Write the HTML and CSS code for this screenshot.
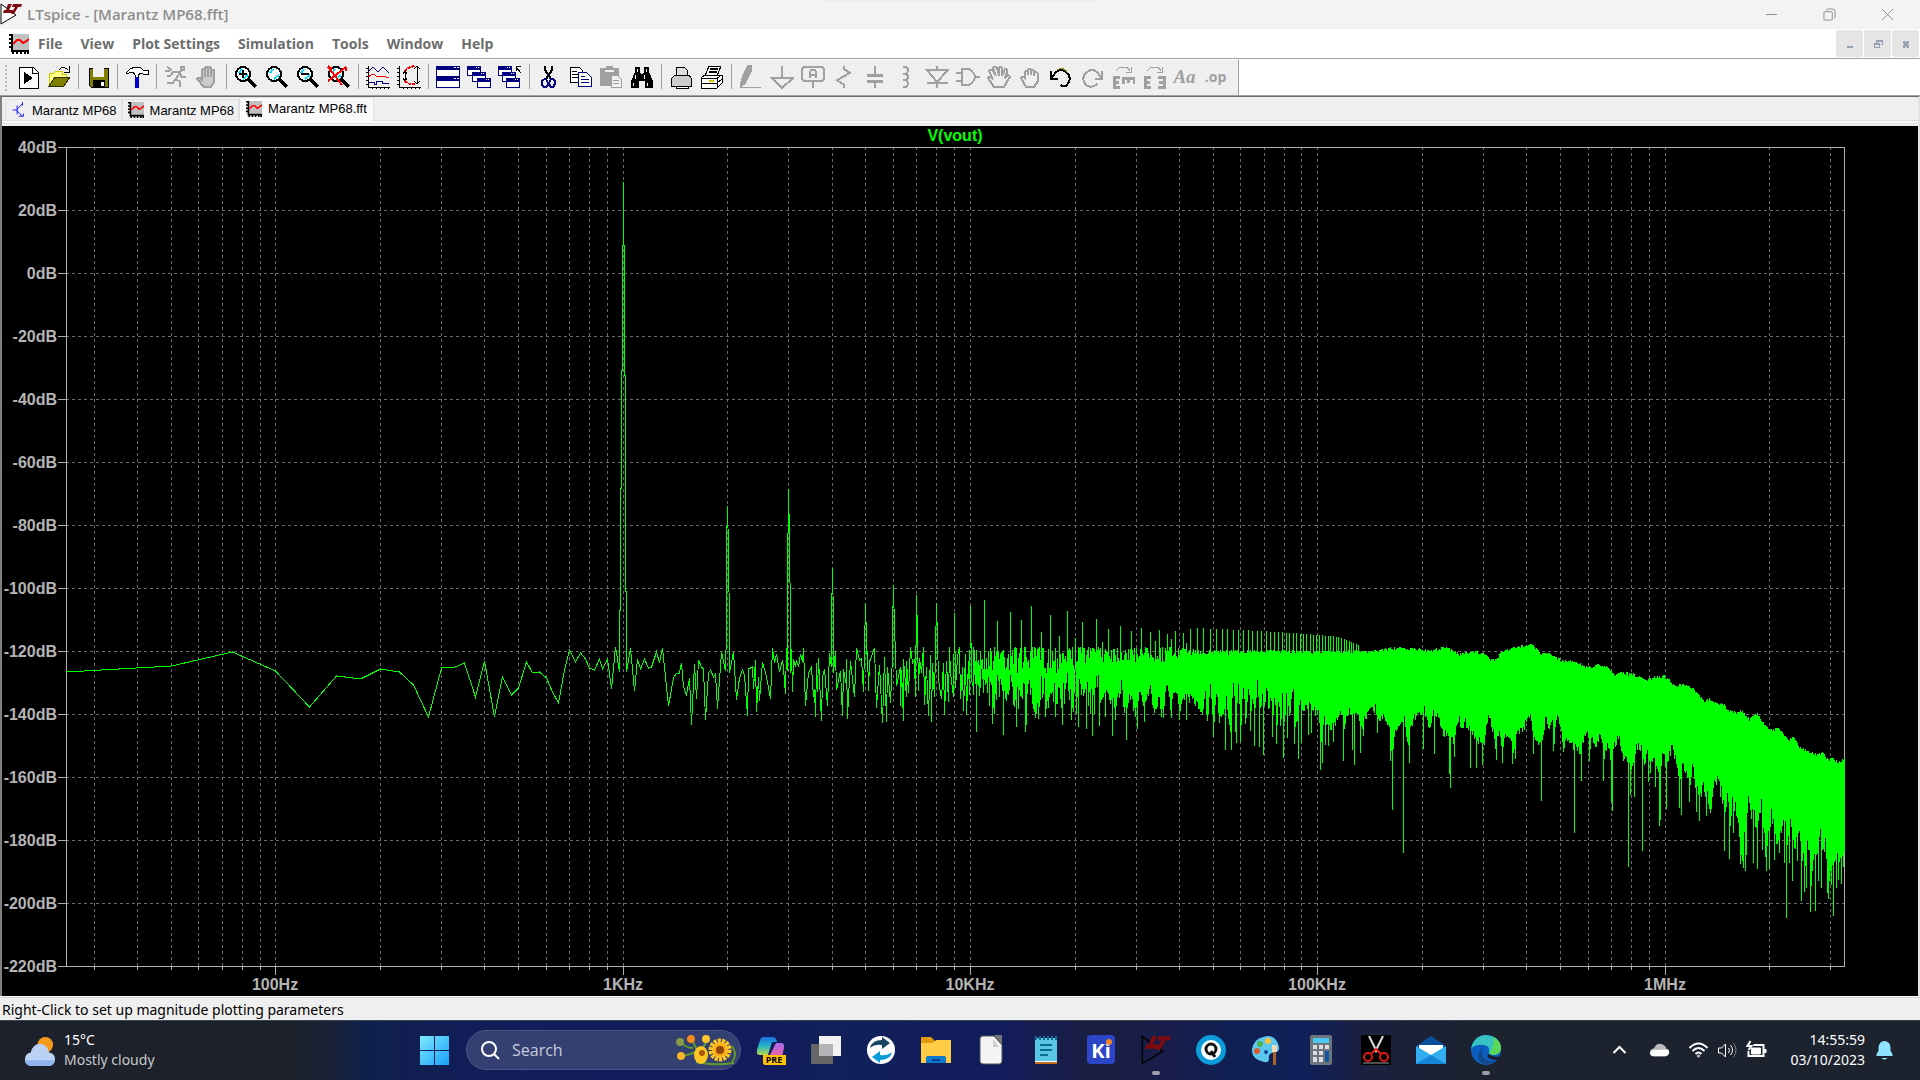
FILE: index.html
```html
<!DOCTYPE html>
<html lang="en">
<head>
<meta charset="utf-8">
<title>LTspice - [Marantz MP68.fft]</title>
<link rel="stylesheet" href="styles.css">
</head>
<body>
<svg class="defs" aria-hidden="true">
  <symbol id="logo" viewBox="0 0 22 22">
    <path d="M1 1V21L16 12z" stroke="currentColor"/>
    <path d="M8 1h4L9 7h4l-1 3H3l1-3h2zM13 1h9l-1 3h-3l-4 7h-3l4-7h-3z" fill="#7d0b10"/>
  </symbol>
  <symbol id="plot" viewBox="0 0 20 20">
    <path d="M3 0h17v16H3z" fill="#c0c0c0"/>
    <path d="M3 0v17M0 1h4M0 5h4M0 9h4M0 13h4M2 17h18M4 17v3M8 17v3M12 17v3M16 17v3M19 17v3" stroke="#000" stroke-width="2" fill="none"/>
    <path d="M4 10l4-4h3l3 3 2-1 4-3" stroke="#f00" stroke-width="2" fill="none"/>
  </symbol>
  <symbol id="lens" viewBox="0 0 24 24">
    <circle cx="9" cy="9" r="7" fill="#fff" stroke="#000" stroke-width="2"/>
    <path d="M5 8l3-4M9 14l5-4" stroke="#0df" stroke-width="2"/>
    <path d="M14 14l8 8" stroke="#000" stroke-width="4"/>
  </symbol>
  <symbol id="win" viewBox="0 0 14 10">
    <path d="M0 0h14v10H0z" fill="#000080"/><path d="M1 4h12v5H1z" fill="#fff"/><path d="M9 1h1v1H9zM11 1h1v1h-1z" fill="#fff"/>
  </symbol>
</svg>

<header class="titlebar">
  <svg class="app-logo"><use href="#logo"/></svg>
  <h1>LTspice - [Marantz MP68.fft]</h1>
  <div class="win-controls">
    <button aria-label="Minimize"><svg viewBox="0 0 14 14"><path d="M1 7h12"/></svg></button>
    <button aria-label="Restore"><svg viewBox="0 0 14 14"><path d="M4 3V2q0-1 1-1h5q3 0 3 3v6q0 1-1 1M2 4h7q1 0 1 1v7q0 1-1 1H2q-1 0-1-1V5q0-1 1-1z"/></svg></button>
    <button aria-label="Close"><svg viewBox="0 0 14 14"><path d="M1 1l12 12M13 1L1 13"/></svg></button>
  </div>
</header>

<nav class="menubar">
  <svg class="menu-icon"><use href="#plot"/></svg>
  <button>File</button><button>View</button><button>Plot Settings</button><button>Simulation</button><button>Tools</button><button>Window</button><button>Help</button>
  <div class="child-controls">
    <button aria-label="Minimize child"><svg viewBox="0 0 10 10"><path d="M2 7h6v2H2z"/></svg></button>
    <button aria-label="Restore child"><svg viewBox="0 0 10 10"><path d="M3 1h7v5H8V5h1V3H4v1H3zM1 4h6v5H1zm1 2v2h4V6z" fill-rule="evenodd"/></svg></button>
    <button aria-label="Close child"><svg viewBox="0 0 10 10"><path d="M2 2h2l1 1 1-1h2v2L7 5l1 2v2H6L5 7 4 9H2V7l1-2-1-1z"/></svg></button>
  </div>
</nav>

<div class="toolbar-row">
<div class="toolbar" role="toolbar">
  <button aria-label="Run file"><svg viewBox="0 0 24 24"><path d="M3 2h14l5 5v16H3z" fill="#fff" stroke="#000"/><path d="M16 2v6h6" fill="none" stroke="#000"/><path d="M8 7l9 6-9 6z"/></svg></button>
  <button aria-label="Open"><svg viewBox="0 0 24 24"><path d="M2 21V8h5l2-2h6v3h4v4" fill="#ffff80" stroke="#cc0"/><path d="M2 21l6-9h15l-6 9z" fill="#808000" stroke="#330"/><path d="M12 5q4-5 9 0M22 1v6h-5" fill="none" stroke="#000"/></svg></button>
  <i></i>
  <button aria-label="Save"><svg viewBox="0 0 24 24"><path d="M3 3h19v19H5l-2-2z" fill="#808000" stroke="#000"/><path d="M7 3h11v9H7z" fill="#efefef"/><path d="M7 15h12v7H7z"/><path d="M15 17h3v4h-3z" fill="#fff"/></svg></button>
  <i></i>
  <button aria-label="Control panel"><svg viewBox="0 0 24 24"><path d="M1 8l4-4 5-2h5l3 3h5v4h-5l-2-1-3 2v3h-3v-3L8 7H5L3 9z" fill="#fff" stroke="#000"/><path d="M10 12h4v11h-4z" fill="#0000d0"/></svg></button>
  <i></i>
  <button aria-label="Run" class="off"><svg viewBox="0 0 24 24"><path d="M17 2h3v3h-3zM17 6l-5 8 4 3v5M15 7H9L7 10M12 13l-3 5H3M16 9l2 3h4M3 2l5 3M1 6h5M3 11h4"/></svg></button>
  <button aria-label="Halt" class="off"><svg viewBox="0 0 24 24"><path d="M7 14V5q1-2 3 0v7V3q1-2 3 0v9V3q2-2 3 0v9V5q2-1 3 0v12l-3 5H9l-7-8q2-3 5 1z" class="hatch"/></svg></button>
  <i></i>
  <button aria-label="Zoom in"><svg viewBox="0 0 24 24"><use href="#lens"/><path d="M5 9h8M9 5v8" stroke="#000" stroke-width="2"/></svg></button>
  <button aria-label="Zoom area"><svg viewBox="0 0 24 24"><use href="#lens"/></svg></button>
  <button aria-label="Zoom out"><svg viewBox="0 0 24 24"><use href="#lens"/><path d="M5 9h8" stroke="#000" stroke-width="2"/></svg></button>
  <button aria-label="Zoom to fit"><svg viewBox="0 0 24 24"><use href="#lens"/><path d="M1 2l14 18M19 2L1 16M1 1l4 3M19 2v4" stroke="#f00" stroke-width="2"/></svg></button>
  <i></i>
  <button aria-label="Autorange"><svg viewBox="0 0 24 24"><path d="M2 1v21h22M0 3h2M0 7h2M0 11h2M0 15h2M0 19h2M6 22v2M10 22v2M14 22v2M18 22v2M22 22v2" fill="none" stroke="#000"/><path d="M2 7l5-5 5 5 5-5 6 6M2 17h6v2h2v-3h6v2h7" fill="none" stroke="#000080"/><path d="M2 12l5-3 5 3 5-1 6 2" fill="none" stroke="#f00"/></svg></button>
  <button aria-label="Polar plot"><svg viewBox="0 0 24 24"><path d="M2 1v21h22M0 3h2M0 7h2M0 11h2M0 15h2M0 19h2M6 22v2M10 22v2M14 22v2M18 22v2M22 22v2M20 1v18M17 4l3-3 3 3M17 16l3 3 3-3M8 6v10M6 9l2-3 2 3M6 13l2 3 2-3" fill="none" stroke="#000"/><path d="M8 6q3-4 10-5M8 16q4 4 10 3" fill="none" stroke="#f00" stroke-width="2" stroke-dasharray="3 1"/></svg></button>
  <i></i>
  <button aria-label="Tile windows"><svg viewBox="0 0 24 24"><path d="M0 1h24v22H0z" fill="#000080"/><path d="M1 5h22v6H1zM1 16h22v6H1zM18 2h2v1h-2zM21 2h2v1h-2zM18 13h2v1h-2zM21 13h2v1h-2z" fill="#fff"/></svg></button>
  <button aria-label="Cascade windows"><svg viewBox="0 0 24 24"><use href="#win" width="14" height="10" y="1"/><use href="#win" width="14" height="10" x="5" y="7"/><use href="#win" width="14" height="10" x="10" y="13"/></svg></button>
  <button aria-label="Close all"><svg viewBox="0 0 24 24"><use href="#win" width="14" height="10" y="1"/><use href="#win" width="14" height="10" x="4" y="7"/><use href="#win" width="14" height="10" x="8" y="13"/><path d="M23 8l-5-6M18 6V1h5" stroke="#000" fill="none"/></svg></button>
  <i></i>
  <button aria-label="Cut"><svg viewBox="0 0 24 24"><path d="M8 1v4l6 9M15 1v4l-6 9" fill="none" stroke="#000" stroke-width="2"/><path d="M9 14q-4 0-4 4t3 4 3-4zM14 14q5 0 4 4t-3 4-3-4z" fill="none" stroke="#000080" stroke-width="2"/></svg></button>
  <button aria-label="Copy"><svg viewBox="0 0 24 24"><path d="M2 2h9l3 3v12H2z" fill="#fff" stroke="#000"/><path d="M4 6h5M4 9h7M4 12h7" stroke="#000"/><path d="M10 7h8l5 5v9H10z" fill="#fff" stroke="#000080"/><path d="M13 11h4M13 14h8M13 17h8" stroke="#000080"/></svg></button>
  <button aria-label="Paste"><svg viewBox="0 0 24 24"><path d="M1 3h6V1h7v2h6v18H1z" fill="#a0a0a0"/><path d="M6 5h9v2H6z" fill="#efefef"/><path d="M12 10h6l4 4v8H12z" fill="#efefef" stroke="#a0a0a0"/><path d="M14 15h6M14 18h6" stroke="#a0a0a0"/></svg></button>
  <button aria-label="Find"><svg viewBox="0 0 24 24"><path d="M5 2h5v5l1 2h2l1-2V2h5v5l4 9v7h-8v-7h-6v7H1v-7l4-9z"/><path d="M7 4v3M16 4v3M5 10v4M14 10v4M3 18v3M17 18v3" stroke="#fff"/></svg></button>
  <i></i>
  <button aria-label="Print"><svg viewBox="0 0 24 24"><path d="M7 10V2h8l3 3v5" fill="#ddd" stroke="#000"/><path d="M2 14l4-4h14l2 3v8H2z" fill="#ccc" stroke="#000"/><path d="M7 21h12v2H7z" fill="#fff" stroke="#000"/></svg></button>
  <button aria-label="Print setup"><svg viewBox="0 0 24 24"><path d="M5 11L9 1h12l-4 10" fill="#fff" stroke="#000"/><path d="M10 4h8M9 7h8" stroke="#000" stroke-width="2"/><path d="M1 13l4-3h17v8l-5 5H1zM1 13h16v10M17 13l5-3M1 18h16M17 18l5-4" fill="#fff" stroke="#000"/><path d="M9 16h5" stroke="#cc0" stroke-width="2"/></svg></button>
  <i></i>
  <button aria-label="Wire" class="off"><svg viewBox="0 0 24 24"><path d="M9 1h3v5L6 18l-4 3 1-7z" fill="#a0a0a0"/><path d="M2 22h20" class="thin"/></svg></button>
  <button aria-label="Ground" class="off"><svg viewBox="0 0 24 24"><path d="M12 1v12M2 13h21L12 23z"/></svg></button>
  <button aria-label="Label net" class="off"><svg viewBox="0 0 24 24"><path d="M3 2h18l2 2v10l-2 2H3l-2-2V4zM12 16v7M9 13V7l1-2h4l1 2v6M9 10h6"/></svg></button>
  <button aria-label="Resistor" class="off"><svg viewBox="0 0 24 24"><path d="M12 1v3l6 4-13 7 7 5v3"/></svg></button>
  <button aria-label="Capacitor" class="off"><svg viewBox="0 0 24 24"><path d="M12 1v9M12 15v8"/><path d="M4 10h16M4 16h16" class="thick"/></svg></button>
  <button aria-label="Inductor" class="off"><svg viewBox="0 0 24 24"><path d="M9 2h3q4 3 0 7H9h3q4 3 0 6H9h3q4 4 0 7H9"/></svg></button>
  <button aria-label="Diode" class="off"><svg viewBox="0 0 24 24"><path d="M12 1v4M2 5h21L12 17zM2 18h21M12 17v6"/></svg></button>
  <button aria-label="Component" class="off"><svg viewBox="0 0 24 24"><path d="M6 4h7q6 4 6 8t-6 8H6zM0 8h6M0 16h6M19 12h5"/></svg></button>
  <button aria-label="Move" class="off"><svg viewBox="0 0 24 24"><path d="M7 22l-6-9q2-2 5 1L2 6q2-3 4 0l3 5-3-8q2-3 4 0l2 8V3q2-2 3 0v8l3-7q3 0 2 3l-2 6 3-3q3 1 1 3l-5 9z"/></svg></button>
  <button aria-label="Drag" class="off"><svg viewBox="0 0 24 24"><path d="M8 22l-5-9q1-3 4 0V7q1-2 3 0v3-5q2-2 3 0v5-4q2-2 3 0v5-3q3-2 4 1v7l-4 6z"/></svg></button>
  <button aria-label="Undo"><svg viewBox="0 0 24 24"><path d="M3 13q6-12 14-6 7 6 1 13-3 3-6 0M2 6v8h7" fill="none" stroke="#000" stroke-width="2"/><path d="M8 5q6-4 11 3" stroke="#990" fill="none"/></svg></button>
  <button aria-label="Redo" class="off"><svg viewBox="0 0 24 24"><path d="M21 13Q15 1 7 7q-7 6-1 13 6 4 11-1M22 6v8h-7"/></svg></button>
  <button aria-label="Rotate" class="off"><svg viewBox="0 0 24 24"><path d="M5 6l4-4h7l3 4M20 2v5h-5" class="thin"/><path d="M9 12H3v10h6M3 17h5M12 19v-6h11v6M17 13v5" class="thick"/></svg></button>
  <button aria-label="Mirror" class="off"><svg viewBox="0 0 24 24"><path d="M5 6l4-4h7l3 4M20 2v5h-5" class="thin"/><path d="M9 12H3v10h6M3 17h5M16 12h6v10h-6M22 17h-5" class="thick"/></svg></button>
  <button aria-label="Comment text" class="off"><b class="glyph serif">Aa</b></button>
  <button aria-label="SPICE directive" class="off"><b class="glyph">.op</b></button>
</div>
</div>

<main class="workspace">
  <div class="tabs" role="tablist">
    <button role="tab"><svg viewBox="0 0 12 18"><path d="M0 9h5M5 4v10M5 8l6-6M5 10l6 6M11 0v4M7 16h5v-3" fill="none" stroke="#00f"/></svg>Marantz MP68</button>
    <button role="tab"><svg><use href="#plot"/></svg>Marantz MP68</button>
    <button role="tab" class="active" aria-selected="true"><svg><use href="#plot"/></svg>Marantz MP68.fft</button>
  </div>
  <svg class="chart" viewBox="2 126 1916 870" role="img" aria-label="FFT of V(vout)">
    <g id="grid"></g>
    <path id="trace"/>
    <g id="labels"></g>
    <text class="trace-name" x="955" y="141">V(vout)</text>
  </svg>
</main>

<footer class="status">Right-Click to set up magnitude plotting parameters</footer>

<div class="taskbar">
  <button class="weather">
    <svg viewBox="0 0 32 32"><circle cx="22" cy="9" r="8" fill="#f69a1c"/><path d="M7 31q-6-1-6-7t6-7q2-9 10-9 7 1 9 9 6 1 6 7t-6 7z" fill="#bcd2f5"/><path d="M9 31q-8 0-8-6h30q-1 6-6 6z" fill="#8fb4ee"/></svg>
    <span>15°C<br><em>Mostly cloudy</em></span>
  </button>
  <div class="apps">
    <button aria-label="Start"><svg viewBox="0 0 30 30"><defs><linearGradient id="st" x1="0" y1="0" x2="1" y2="1"><stop stop-color="#7ee8ff"/><stop offset="1" stop-color="#18a0fb"/></linearGradient></defs><path d="M1 1h14v14H1zM16 1h14v14H16zM1 16h14v14H1zM16 16h14v14H16z" fill="url(#st)"/></svg></button>
    <label class="search">
      <svg class="glass" viewBox="0 0 20 20"><circle cx="9" cy="9" r="7"/><path d="M14 14l5 5"/></svg>
      <input type="text" placeholder="Search" aria-label="Search">
      <svg class="flowers" viewBox="0 0 60 32">
        <path d="M5 8q4 6 12 6M16 6l7 14M30 8L24 20M5 23l15-5M20 28q18 4 38 1M56 12q6 8 0 16" stroke="#5f9a2c" stroke-width="2" fill="none"/>
        <circle cx="4" cy="8" r="4" fill="#8a9a4a"/><circle cx="15" cy="5" r="4" fill="#f28a1c"/><circle cx="30" cy="5" r="4" fill="#fbc42c"/><circle cx="5" cy="22" r="4" fill="#f6b52a"/>
        <ellipse cx="25" cy="21" rx="7" ry="9" fill="#fcc722"/><circle cx="26" cy="19" r="3" fill="#a85a0a"/>
        <circle cx="44" cy="16" r="8" fill="#f8a81a"/><circle cx="44" cy="16" r="9" fill="none" stroke="#fcc722" stroke-width="5" stroke-dasharray="3 1"/><circle cx="44" cy="16" r="4" fill="#8f4708"/>
      </svg>
    </label>
    <button aria-label="Copilot"><svg viewBox="0 0 30 30"><defs><linearGradient id="cp" x1="0" y1="0" x2="0" y2="1"><stop stop-color="#1a6fe0"/><stop offset=".5" stop-color="#25b5c8"/><stop offset="1" stop-color="#b8d84a"/></linearGradient><linearGradient id="cq" x1="0" y1="0" x2="0" y2="1"><stop stop-color="#a66cf5"/><stop offset="1" stop-color="#f0609a"/></linearGradient></defs><path d="M7 2h10q3 0 4 5h-5l-4 13H4q-4 0-3-5L4 5q1-3 3-3z" fill="url(#cp)"/><path d="M20 8h5q4 0 3 5l-2 9H13z" fill="url(#cq)"/><path d="M7 20h23v10H9q-2 0-2-3z" fill="#ffc20a"/><text x="18" y="28" class="pre">PRE</text></svg></button>
    <button aria-label="Task view"><svg viewBox="0 0 30 30"><path d="M0 9h22v20H0z" fill="#666"/><path d="M8 1h22v20H8z" fill="#f2f2f2"/><path d="M8 9h14v12H8z" fill="#b4b4b8"/></svg></button>
    <button aria-label="Sync"><svg viewBox="0 0 30 30"><circle cx="15" cy="15" r="14" fill="#fff"/><path d="M4 13q2-8 12-8V2l8 6-8 6v-4q-7-1-12 3z" fill="#154560"/><path d="M26 17q-2 8-12 8v3l-8-6 8-6v4q7 1 12-3z" fill="#0a9bd8"/></svg></button>
    <button aria-label="File Explorer"><svg viewBox="0 0 30 30"><path d="M0 3q0-1 1-1h9l4 4h16v10H0z" fill="#e29a10"/><path d="M0 8h12l3-3h15v23H0z" fill="#ffcc45"/><path d="M5 28v-5q0-2 2-2h16q2 0 2 2v5z" fill="#0f78cc"/><path d="M11 25h8" stroke="#064a90" stroke-width="2"/></svg></button>
    <button aria-label="LibreOffice"><svg viewBox="0 0 30 30"><path d="M7 1h11l8 9v16q0 3-3 3H7q-3 0-3-3V4q0-3 3-3z" fill="#f4f4f4" stroke="#555"/><path d="M18 0h8v10z" fill="#777"/><path d="M17 4v8h6z" fill="#ccc"/></svg></button>
    <button aria-label="Notepad"><svg viewBox="0 0 30 30"><path d="M4 3h22v23H4z" fill="#58c6e4"/><path d="M4 26h22v3H4z" fill="#c26a20"/><path d="M4 26h22v1H4z" fill="#fff"/><path d="M9 10h12M9 15h12M9 20h8" stroke="#0a6a90" stroke-width="2"/><path d="M5 1v4M9 1v4M13 1v4M17 1v4M21 1v4M25 1v4" stroke="#146a94" stroke-width="2"/></svg></button>
    <button aria-label="KiCad"><svg viewBox="0 0 30 30"><rect x="1" y="0" width="28" height="29" rx="4" fill="#2b46c8"/><text x="15" y="23" class="ki">Ki</text><circle cx="23" cy="7" r="3" fill="#f58220"/></svg></button>
    <button aria-label="LTspice" class="running"><svg viewBox="0 0 22 22" class="dark"><use href="#logo"/></svg></button>
    <button aria-label="Q app"><svg viewBox="0 0 30 30"><circle cx="15" cy="15" r="15" fill="#0d9bdc"/><circle cx="15" cy="15" r="10" fill="#fff"/><circle cx="15" cy="14" r="5" fill="none" stroke="#111" stroke-width="3"/><path d="M15 16l4 6" stroke="#111" stroke-width="3"/></svg></button>
    <button aria-label="Paint"><svg viewBox="0 0 30 30"><path d="M12 2q13-4 16 10 1 6-7 6-4 1-3 6 0 4-5 3Q0 24 1 14 3 4 12 2z" fill="#5cc8f0"/><circle cx="9" cy="9" r="3" fill="#4bb54a"/><circle cx="17" cy="6" r="3" fill="#ffc22e"/><circle cx="6" cy="16" r="3" fill="#e05a30"/><circle cx="15" cy="17" r="2" fill="#124a9a"/><path d="M21 10h5v7h-5z" fill="#f3d9b4"/><path d="M22 17h3v13h-3z" fill="#b06020"/></svg></button>
    <button aria-label="Calculator"><svg viewBox="0 0 30 30"><rect x="4" y="0" width="22" height="30" rx="2" fill="#6f757d"/><path d="M7 3h16v5H7z" fill="#4cc8f5"/><path d="M7 10h4v4H7zM13 10h4v4h-4zM19 10h4v4h-4zM7 16h4v4H7zM13 16h4v4h-4zM7 22h4v5H7zM13 22h4v5h-4z" fill="#d9dde2"/><path d="M19 16h4v11h-4z" fill="#0f55a0"/></svg></button>
    <button aria-label="Snipping"><svg viewBox="0 0 30 30"><path d="M0 0h30v30H0z"/><path d="M8 1l8 16M22 1l-8 16" stroke="#ddd" stroke-width="2"/><circle cx="7" cy="22" r="4" fill="none" stroke="#e01818" stroke-width="2"/><circle cx="23" cy="22" r="4" fill="none" stroke="#e01818" stroke-width="2"/><path d="M10 19l5-5 5 5" stroke="#e01818" stroke-width="2" fill="none"/><path d="M2 28h26" stroke="#999"/></svg></button>
    <button aria-label="Mail"><svg viewBox="0 0 30 30"><path d="M0 11L15 1l15 10v6H0z" fill="#0a4f9c"/><path d="M3 10h24v12H3z" fill="#fff"/><path d="M0 11l15 9 15-9v18H0z" fill="#32aef0"/><path d="M0 29l15-9 15 9z" fill="#1585d8"/></svg></button>
    <button aria-label="Edge" class="running"><svg viewBox="0 0 30 30"><circle cx="15" cy="15" r="15" fill="#0c5fc0"/><path d="M0 14Q3 0 15 0q14 1 15 13 0 7-8 7-5 0-4-4 1-5-5-6Q4 9 0 14z" fill="#36c2c0"/><path d="M22 2q8 4 8 11 0 7-8 7l-4-2q6-6 4-16z" fill="#5bd85a"/><path d="M12 12q-4 10 6 14 5 1 8-1-6 6-14 4-8-4-3-14z" fill="#124a8c"/><path d="M18 19q4 4 12 2l-3 4q-9 0-11-4z" fill="#1b2030"/></svg></button>
  </div>
  <div class="tray">
    <button aria-label="Hidden icons"><svg viewBox="0 0 20 20"><path d="M4 13l6-6 6 6"/></svg></button>
    <button aria-label="OneDrive"><svg viewBox="0 0 24 20"><path d="M6 17q-5 0-5-4t5-5q2-6 8-5 5 1 6 6 4 2 3 5-1 3-4 3z" fill="#bbb" stroke="none"/><path d="M4 17q-4-2-2-5 2-3 8-2l12-1q3 6-3 8z" fill="#fff" stroke="none"/></svg></button>
    <button aria-label="Wi-Fi"><svg viewBox="0 0 20 20"><path d="M1 8q9-9 18 0M4 11q6-6 12 0M7 14q3-3 6 0" stroke-width="2"/><circle cx="10" cy="16" r="1"/></svg></button>
    <button aria-label="Volume"><svg viewBox="0 0 20 20"><path d="M1 8v5h3l4 4V4L4 8zM11 8q2 2 0 5M13 5q4 5 0 10"/><path d="M16 3q5 7 0 14" opacity=".4"/></svg></button>
    <button aria-label="Battery"><svg viewBox="0 0 20 20"><path d="M7 5h10v11H2v-5M19 9v4M4 1L1 6h4l-3 4" stroke-width="2"/><path d="M5 8h9v6H5z" fill="#fff"/></svg></button>
    <button class="clock">14:55:59<br>03/10/2023</button>
    <button aria-label="Notifications"><svg viewBox="0 0 20 20"><path d="M2 16V14l2-3V7q1-6 6-6t6 6v4l2 3v2zM7 18h6q-3 3-6 0z" fill="#8fe3ff" stroke="none"/></svg></button>
  </div>
</div>
<script src="plot.js"></script>
</body>
</html>
```
FILE: styles.css
```css
* { box-sizing: border-box; }
body {
  margin: 0;
  min-height: 100vh;
  display: flex;
  flex-direction: column;
  background: #efefef;
  font-family: "Noto Sans", "Open Sans", sans-serif;
  font-size: 14px;
  color: #000;
}
button {
  border: 0;
  padding: 0;
  margin: 0;
  background: none;
  font: inherit;
  color: inherit;
}
svg { display: block; flex: none; }
.defs { display: none; }

.titlebar {
  position: relative;
  display: flex;
  align-items: center;
  height: 29px;
  background: #f3f3f3;
  color: #8d8d8d;
  font-family: "Open Sans", sans-serif;
}
.titlebar::after {
  content: "";
  position: absolute;
  top: 0;
  left: 43%;
  right: 43%;
  height: 1px;
  background: #e9e9e9;
  box-shadow: 0 0 3px #ddd;
}
.app-logo { width: 22px; height: 22px; margin-bottom: 2px; color: #000; fill: #fff; }
.titlebar h1 { margin: 0 0 2px 5px; font-size: 15px; line-height: 20px; font-weight: 600; }
.win-controls { display: flex; margin-left: auto; margin-right: 4px; }
.win-controls button { width: 58px; height: 28px; display: grid; place-items: center; }
.win-controls svg { width: 13px; height: 13px; fill: none; stroke: #8a8a8a; }

.menubar {
  display: flex;
  align-items: center;
  gap: 18px;
  height: 30px;
  padding-left: 9px;
  background: #fff;
  border-bottom: 1px solid #a0a0a0;
  color: #6d6d6d;
  font-family: "Open Sans", sans-serif;
  font-size: 14px;
  font-weight: 700;
}
.menu-icon { width: 20px; height: 20px; margin-right: -9px; }
.child-controls { display: flex; gap: 1px; margin-left: auto; padding-right: 1px; }
.child-controls button { width: 27px; height: 27px; background: #e5e5e5; border-radius: 2px; display: grid; place-items: center; }
.child-controls svg { width: 10px; height: 10px; fill: #93a1b3; }

.toolbar-row { display: flex; background: #fff; }
.toolbar {
  position: relative;
  display: flex;
  align-items: center;
  height: 36px;
  padding: 0 7px 2px 12px;
  background: #efefef;
  border-top: 1px solid #fff;
  border-right: 1px solid #a0a0a0;
}
.toolbar::before {
  content: "";
  position: absolute;
  left: 5px;
  top: 5px;
  width: 2px;
  height: 26px;
  background: repeating-linear-gradient(#bbb 0 2px, transparent 2px 4px);
}
.toolbar button { width: 31px; height: 26px; display: grid; place-items: center; }
.toolbar svg { width: 24px; height: 24px; shape-rendering: crispEdges; }
.toolbar i { width: 1px; height: 25px; margin: 0 3px 0 4px; background: #a0a0a0; }
.off { color: #a0a0a0; }
.off path { fill: none; stroke: #a0a0a0; stroke-width: 2; }
.off path[fill] { fill: #a0a0a0; }
.off .thin { stroke-width: 1; }
.off .thick { stroke-width: 3; }
.off .hatch { fill: #ccc; }
.glyph { font: 700 14px/20px "Open Sans", sans-serif; }
.glyph.serif { font: italic 700 19px/20px "Liberation Serif", serif; }

.workspace {
  border-top: 1px solid #696969;
  border-left: 2px solid #808080;
  border-right: 2px solid #e3e3e3;
  box-shadow: 0 -1px #a0a0a0;
  margin-top: 1px;
}
.tabs {
  display: flex;
  align-items: flex-end;
  height: 29px;
  padding: 0 0 5px 3px;
  background: linear-gradient(#efefef 23px, #e0e0e0 23px 24px, #fafafa 24px 26px, #e0e0e0 26px 27px, #f0f0f0 27px);
}
.tabs button {
  display: flex;
  align-items: center;
  gap: 6px;
  height: 22px;
  padding: 0 4px 0 5px;
  background: #f0f0f0;
  border: 1px solid #e0e0e0;
  font: 13px "Liberation Sans", sans-serif;
  white-space: nowrap;
}
.tabs button:first-child { gap: 8px; padding-left: 6px; }
.tabs button.active { height: 24px; padding: 0 6px 2px 6px; background: #fafafa; border-bottom: 0; }
.tabs svg { width: 16px; height: 16px; }
.tabs button:first-child svg { width: 12px; }

.chart { width: 100%; height: auto; background: #000; shape-rendering: crispEdges; }
.chart text { font: 700 16px "Liberation Sans", sans-serif; fill: #b4b4b4; text-anchor: middle; }
.chart .db { text-anchor: end; }
.chart .trace-name { fill: #0f0; }
.grid-line { fill: none; stroke: #6a6a6a; stroke-dasharray: 3 3; }
.axis { fill: none; stroke: #b0b0b0; }
#trace { fill: none; stroke: #0f0; }

.status {
  flex: 1 0 24px;
  height: 24px;
  min-height: 24px;
  padding-left: 2px;
  border-top: 1px solid #fff;
  box-shadow: inset 0 1px #d0d0d0;
  line-height: 26px;
}

.taskbar {
  position: relative;
  display: flex;
  align-items: center;
  justify-content: space-between;
  height: 60px;
  padding-bottom: 2px;
  border-top: 1px solid #3b4252;
  color: #fff;
  background: linear-gradient(90deg, #1c212b 0 15%, #1a2234 17%, #0f204d 19%, #121d58 25%, #121c5e 40%, #11215a 43%, #121c5c 52%, #1a1e40 57%, #181d4a 61%, #102054 64%, #0f2058 68%, #1b2040 71%, #1c222e 77%);
}
.weather { display: flex; align-items: center; gap: 9px; width: 416px; padding-left: 24px; text-align: left; line-height: 20px; }
.weather svg { width: 31px; height: 31px; margin-top: 3px; }
.weather em { font-style: normal; color: #c8c9cc; }
.apps { display: flex; flex: 1; align-items: center; }
.apps button { position: relative; width: 55px; height: 50px; display: grid; place-items: center; }
.apps button:first-child { width: 36px; }
.apps button svg { width: 30px; height: 30px; }
.apps .dark { color: #000; fill: none; }
.running::after {
  content: "";
  position: absolute;
  bottom: 0;
  left: 24px;
  width: 8px;
  height: 4px;
  border-radius: 2px;
  background: #9a9ca8;
}
.pre { font: 700 9px "Open Sans", sans-serif; text-anchor: middle; }
.ki { font: 700 20px "Noto Sans", sans-serif; fill: #fff; text-anchor: middle; }
.search {
  display: flex;
  align-items: center;
  width: 275px;
  height: 40px;
  margin: 0 2px 0 14px;
  padding: 0 4px 0 13px;
  border: 1px solid #4b5685;
  border-radius: 20px;
  background: #343f72;
}
.glass { width: 20px; height: 20px; fill: none; stroke: #fff; stroke-width: 2; }
.search input {
  flex: 1;
  min-width: 0;
  padding: 0 0 0 12px;
  border: 0;
  background: none;
  font: 16px "Open Sans", sans-serif;
  color: #fff;
}
.search input::placeholder { color: #c8cbd8; opacity: 1; }
.flowers { width: 60px; height: 32px; }
.tray { display: flex; align-items: center; padding-right: 24px; }
.tray button { width: 29px; display: grid; place-items: center; }
.tray button:nth-child(-n+2) { width: 40px; }
.tray svg { width: 21px; height: 20px; fill: none; stroke: #fff; stroke-width: 2; }
.tray button:nth-child(n+3) svg { stroke-width: 1; }
.tray button:nth-child(3) { margin-left: 4px; }
.tray .clock { display: block; width: auto; margin-left: 20px; text-align: right; line-height: 20px; }
.tray button:last-child { width: 24px; margin-left: 7px; }
```
FILE: plot.js
```js
const LEFT = 66, RIGHT = 1844, TOP = 147, BOTTOM = 966, DECADE = 347.3, X1K = 623.2;
const xOf = f => Math.floor(X1K + DECADE * Math.log10(f / 1000));
const yOf = db => TOP + (40 - db) * 3.15;
const NS = "http://www.w3.org/2000/svg";

function add(parent, tag, attrs, text) {
  const el = document.createElementNS(NS, tag);
  for (const k in attrs) el.setAttribute(k, attrs[k]);
  if (text) el.textContent = text;
  document.getElementById(parent).append(el);
}

// Grid, ticks and axis labels
let dashes = "", ticks = `M${LEFT}.5 ${TOP}.5H${RIGHT}.5V${BOTTOM}.5H${LEFT}.5Z`;
for (let db = 40; db >= -220; db -= 20) {
  const y = Math.round(yOf(db)) + 0.5;
  if (db < 40 && db > -220) dashes += `M${LEFT} ${y}H${RIGHT}`;
  ticks += `M58 ${y}H${LEFT}`;
  add("labels", "text", { class: "db", x: 57, y: y + 5 }, db + "dB");
}
for (let e = 1; e <= 6; e++) for (let m = 1; m <= 9; m++) {
  const f = m * 10 ** e;
  if (f < 26 || f > 3.2e6) continue;
  const x = xOf(f) + 0.5;
  dashes += `M${x} ${TOP}V${BOTTOM}`;
  ticks += `M${x} ${BOTTOM}v${m === 1 ? 9 : 4}`;
}
[["100Hz", 100], ["1KHz", 1e3], ["10KHz", 1e4], ["100KHz", 1e5], ["1MHz", 1e6]].forEach(([t, f]) =>
  add("labels", "text", { x: xOf(f), y: 990 }, t));
add("grid", "path", { class: "grid-line", d: dashes });
add("grid", "path", { class: "axis", d: ticks });

// Samples are stored as x,y pairs in thirds of a unit from an origin
const unpack = (s, ox, oy) => s.trim().split(/\s+/).map(p => {
  const [x, y] = p.split(",").map(Number);
  return [ox + x / 3, oy + y / 3];
});

// Individually resolved bins up to 10 kHz
const low = "66,672 171,666 232,652 275,671 309,707 336,676 360,679 380,669 399,672 413,685 428,717 441,668 455,667 464,663 475,697 484,661 494,717 502,677 511,695 518,688 526,662 532,673 539,672 546,678 552,692 558,703 564,670 569,650 575,662 580,653 585,659 589,668 594,670 599,659 602,669 607,659 611,689 615,647 619,672 619,610 620,610 620,488 621,488 621,370 622,370 622,245 623,245 623,182 623,245 624,245 624,375 625,375 625,591 626,591 626,672"
  .split(" ").map(p => p.split(",").map(Number));
const mid = unpack(`91,565 104,692 113,598 122,628 134,596 144,625 153,620 170,576 179,610 188,565 205,738 220,655 230,640 239,638 244,610 251,680 260,706 268,655 275,795 284,612 290,716 296,600 303,622 311,628 317,779 325,640 332,630 341,650 346,643 353,746 364,576 376,632 378,507 380,262 383,138 385,268 387,519 389,640 401,576 410,719 418,655 428,630 434,645 442,767 446,627 457,620 461,686 466,600 470,755 475,652 479,723 488,607 498,650 510,716 517,565 523,608 528,583 538,635 546,601 551,625 556,702 560,565 562,632 562,358 565,88 568,228 571,504 572,640 575,568 577,696 581,598 587,620 590,600 594,622 602,583 606,605 611,565 617,737 624,640 633,620 641,710 643,687 647,770 650,610 653,695 656,595 664,782 668,650 674,627 683,737 688,580 694,620 695,475 697,325 700,483 701,640 706,574 710,690 722,632 727,767 731,628 738,678 739,598 743,776 746,712 752,604 764,710 769,565 778,600 784,598 790,697 794,565 796,430 799,534 801,632 802,572 806,692 808,607 823,565 829,743 838,616 847,788 853,592 860,785 862,622 871,728 876,590 878,500 880,376 883,510 886,572 889,677 901,622 902,737 904,630 911,782 910,598 918,710 920,604 926,700 931,562 938,610 942,600 946,712 949,405 952,520 955,692 958,595 964,640 970,562 974,735 980,622 985,767 991,586 995,785 997,608 1003,712 1009,430 1012,538 1015,660 1024,716 1031,610 1034,765 1039,604 1045,725 1048,562 1052,640 1060,710 1063,460 1066,685 1072,590 1078,562 1082,716 1087,620 1091,752 1097,582 1100,765 1105,604 1108,706 1111,437 1113,650 1117,677`, 600, 460);

// Upper and lower limits of the dense part of the trace
const upper = [
  ...unpack("1111,562 1498,562", 600, 460),
  ...unpack("30,202 160,202 280,202 340,208 470,211 600,210 700,213 830,211 870,213 930,202 1000,203 1050,210 1095,198 1140,220 1180,210 1215,222 1230,236 1245,236 1270,208 1320,198", 1080, 580),
  ...unpack("25,117 45,117 65,93 90,83 105,83 145,67 160,73 180,97 205,99 245,119 290,122 312,138 340,138 355,130 380,138 395,150 402,166 420,154 460,160 497,178 515,170 550,165 570,178 585,198 605,190 640,205 672,243 690,233 715,252 728,244 742,270 770,275 783,268 808,295 830,277 855,315 875,328 893,320 925,358 937,347 960,380 985,390 1005,400 1030,395 1040,412 1060,415 1075,424 1093,412", 1480, 620)
];
const lower = [
  ...unpack("1111,655 1140,650 1150,640 1165,650 1180,700 1195,655 1215,705 1230,650 1245,710 1260,655 1280,690 1290,655 1310,740 1325,660 1345,710 1360,655 1378,700 1400,660 1415,710 1425,650 1450,700 1462,660 1480,715 1490,640", 600, 460),
  ...unpack("0,380 7,295 18,370 28,325 38,400 50,340 53,285 60,350 80,320 90,350 105,370 120,330 124,285 130,400 150,340 165,400 180,325 190,370 211,320 220,400 235,350 250,400 259,300 270,380 284,310 300,390 310,350 330,350 345,360 370,390 374,320 380,430 391,310 400,450 409,312 415,420 430,390 437,345 450,460 460,282 466,470 475,295 480,470 490,292 496,460 505,291 511,430 517,328 523,400 532,297 538,400 547,345 550,400 559,303 565,400 571,325 577,440 583,333 590,450 595,322 601,450 607,318 613,450 619,322 628,400 640,316 646,450 661,343 668,380 683,365 700,390 715,395 720,500 730,415 745,440 765,420 779,376 792,435 800,400 815,385 830,400 845,440 860,390 885,378 895,430 913,400 930,450 935,540 945,440 972,415 985,500 990,450 1010,385 1022,400 1030,380 1045,440 1060,390 1070,405 1090,450 1105,470 1120,480 1135,410 1145,440 1155,420 1170,440 1190,480 1195,480", 1080, 580),
  ...unpack("0,350 10,370 22,283 35,310 45,370 57,325 65,380 75,335 90,340 100,390 110,340 125,320 140,295 152,290 160,340 175,370 190,335 196,283 205,310 215,300 222,360 230,275 240,320 250,370 265,345 280,370 300,390 318,330 330,380 335,345 350,370 362,335 372,400 382,365 395,420 402,365 416,352 425,400 440,410 455,440 468,380 483,375 495,430 500,385 510,440 523,390 537,470 547,388 556,430 577,368 590,440 600,480 607,430 620,460 630,500 638,415 645,490 655,510 670,490 690,540 700,490 712,480 725,510 735,580 742,510 750,590 757,543 770,560 785,690 793,627 797,700 802,525 815,580 835,600 844,527 855,670 875,562 885,640 900,640 910,562 920,640 934,595 945,670 957,610 970,720 983,662 995,740 1003,682 1010,720 1021,637 1030,700 1034,652 1045,760 1060,680 1070,700 1075,692 1085,720 1093,690", 1480, 620)
];
// Deep nulls below the dense part
const nulls = [
  ...unpack("1130,815 1138,707 1150,700 1168,737 1177,791 1183,761 1189,719 1210,824 1216,707 1228,690 1243,735 1249,800 1255,746 1276,815 1279,794 1291,697 1306,725 1315,776 1336,770 1342,722 1360,725 1366,770 1387,794 1393,731 1414,779 1420,755 1429,761 1435,800 1459,806 1465,737 1471,761 1477,827 1483,761 1498,797", 600, 460),
  ...unpack("18,446 37,468 58,437 76,410 97,468 106,419 139,480 172,446 193,425 244,410 274,413 298,419 319,419 400,471 436,510 454,510 469,489 511,453 523,497 538,500 550,525 577,471 589,491 610,534 622,473 643,491 655,537 664,489 685,464 694,458 721,570 727,549 736,494 745,497 760,486 790,543 817,510 823,555 841,519 850,467 892,458 931,543 937,690 970,819 988,549 1030,506 1063,521 1108,582 1111,624 1123,530 1171,563 1189,563 1207,555 1249,540 1267,549 1297,551 1306,537", 1080, 580),
  ...unpack("49,419 67,428 97,431 106,416 160,401 184,543 220,392 250,395 283,638 304,482 328,422 370,482 394,545 397,573 445,741 451,525 463,530 487,692 505,486 526,500 538,617 541,600 559,567 598,563 604,585 628,545 649,575 658,602 679,587 691,580 694,567 733,692 748,716 760,640 781,731 790,743 796,752 820,728 832,746 847,689 859,752 868,746 883,719 898,700 913,728 919,893 928,728 937,782 952,722 964,842 973,815 979,803 991,875 994,797 1006,872 1015,782 1024,803 1042,820 1045,836 1054,794 1060,887 1069,803 1075,780 1084,791 1090,737", 1480, 620)
];
// Harmonic peaks of the 1 kHz tone, by harmonic number
const peaks = { 11: 600, 12: 621, 13: 612, 14: 620, 15: 606, 16: 632, 17: 615, 18: 636, 19: 611, 20: 638, 21: 622, 23: 619, 24: 642, 25: 629, 27: 626, 29: 631, 31: 628, 33: 632, 34: 641, 35: 630, 37: 634, 38: 639, 39: 631, 41: 633, 42: 643, 43: 629 };
for (let n = 45; n < 133; n += 2) peaks[n] = n < 85 ? 628 + (n - 45) / 8 : n < 115 ? 633 + (n - 85) / 8 : 637 + (n - 115) / 2;

function at(list, x) {
  let i = 1;
  while (i < list.length - 1 && list[i][0] < x) i++;
  const [a, b] = [list[i - 1], list[i]];
  const t = Math.min(1, Math.max(0, (x - a[0]) / (b[0] - a[0] || 1)));
  return a[1] + (b[1] - a[1]) * t;
}
let seed = 7;
const rnd = () => (seed = (seed * 16807) % 2147483647) / 2147483647;

const cols = new Map();
for (let x = 973; x <= RIGHT; x++) {
  const rough = x < 1080 ? 26 : x < 1180 ? 16 : x < 1240 ? 6 : 3;
  const jag = x < 1080 ? 28 : x < 1700 ? 10 : 20;
  cols.set(x, [at(upper, x) + rnd() ** 2 * rough, at(lower, x) + (rnd() - 0.3) * jag]);
}
for (const [x, y] of nulls) {
  const c = cols.get(Math.round(x - 0.2));
  if (c) c[1] = Math.max(c[1], y);
}
for (const n in peaks) {
  const c = cols.get(xOf(n * 1000));
  if (c) c[0] = Math.min(c[0], peaks[n]);
}
let d = "M" + [...low, ...mid].map(([x, y]) => `${Math.floor(x + 0.1) + 0.5} ${Math.round(y)}`).join("L");
for (const [x, [t, b]] of cols) d += `M${x}.5 ${Math.round(t)}V${Math.round(b)}`;
document.getElementById("trace").setAttribute("d", d);
```
